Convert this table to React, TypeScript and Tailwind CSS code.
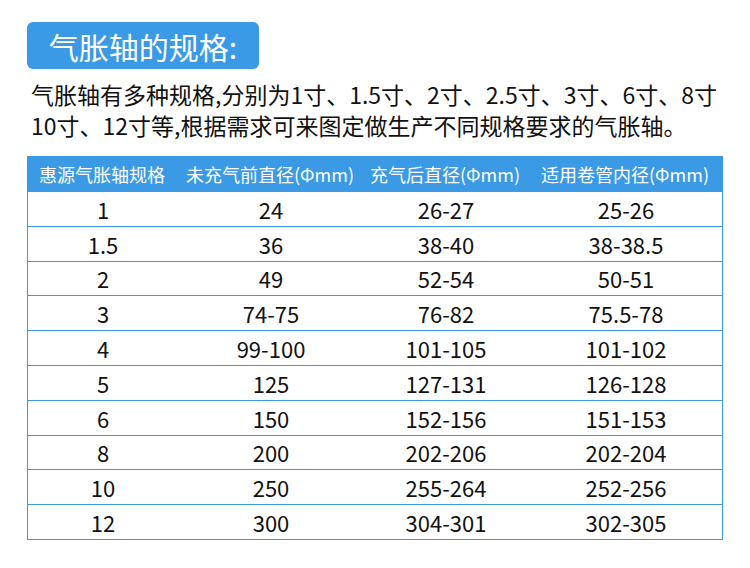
import React from "react";

const rows: [string, string, string, string][] = [
  ["1", "24", "26-27", "25-26"],
  ["1.5", "36", "38-40", "38-38.5"],
  ["2", "49", "52-54", "50-51"],
  ["3", "74-75", "76-82", "75.5-78"],
  ["4", "99-100", "101-105", "101-102"],
  ["5", "125", "127-131", "126-128"],
  ["6", "150", "152-156", "151-153"],
  ["8", "200", "202-206", "202-204"],
  ["10", "250", "255-264", "252-256"],
  ["12", "300", "304-301", "302-305"],
];

const cols = "grid grid-cols-[150px_186px_164px_196px]";

export default function App() {
  return (
    <div
      className="w-[750px] h-[568px] bg-white overflow-hidden"
      style={{ fontFamily: '"Noto Sans CJK SC", "Noto Sans", sans-serif' }}
    >
      <div className="pt-[22px] pl-[27px]">
        <div className="inline-flex items-center justify-center w-[232px] h-[47px] rounded-[6px] bg-[#3a9ae6] text-white text-[30px] leading-none">
          气胀轴的规格:
        </div>
      </div>
      <div className="pl-[31px] pt-[10px] text-[23px] leading-[31px] text-[#111]">
        <div>气胀轴有多种规格,分别为1寸、1.5寸、2寸、2.5寸、3寸、6寸、8寸</div>
        <div>10寸、12寸等,根据需求可来图定做生产不同规格要求的气胀轴。</div>
      </div>
      <div className="ml-[27px] mt-[15px] w-[696px]">
        <div className={`${cols} h-[36px] items-center bg-[#3a9ae6] text-white text-[18px] leading-none`}>
          <div className="text-center">惠源气胀轴规格</div>
          <div className="text-center">未充气前直径(Φmm)</div>
          <div className="text-center">充气后直径(Φmm)</div>
          <div className="text-center">适用卷管内径(Φmm)</div>
        </div>
        <div className="border-x border-[#3a9ae6]">
          {rows.map((r, i) => (
            <div
              key={i}
              className={`${cols} h-[34.8px] items-center border-b border-[#3a9ae6] text-[22px] leading-none text-[#111]`}
            >
              {r.map((c, j) => (
                <div key={j} className="text-center">
                  {c}
                </div>
              ))}
            </div>
          ))}
        </div>
      </div>
    </div>
  );
}
